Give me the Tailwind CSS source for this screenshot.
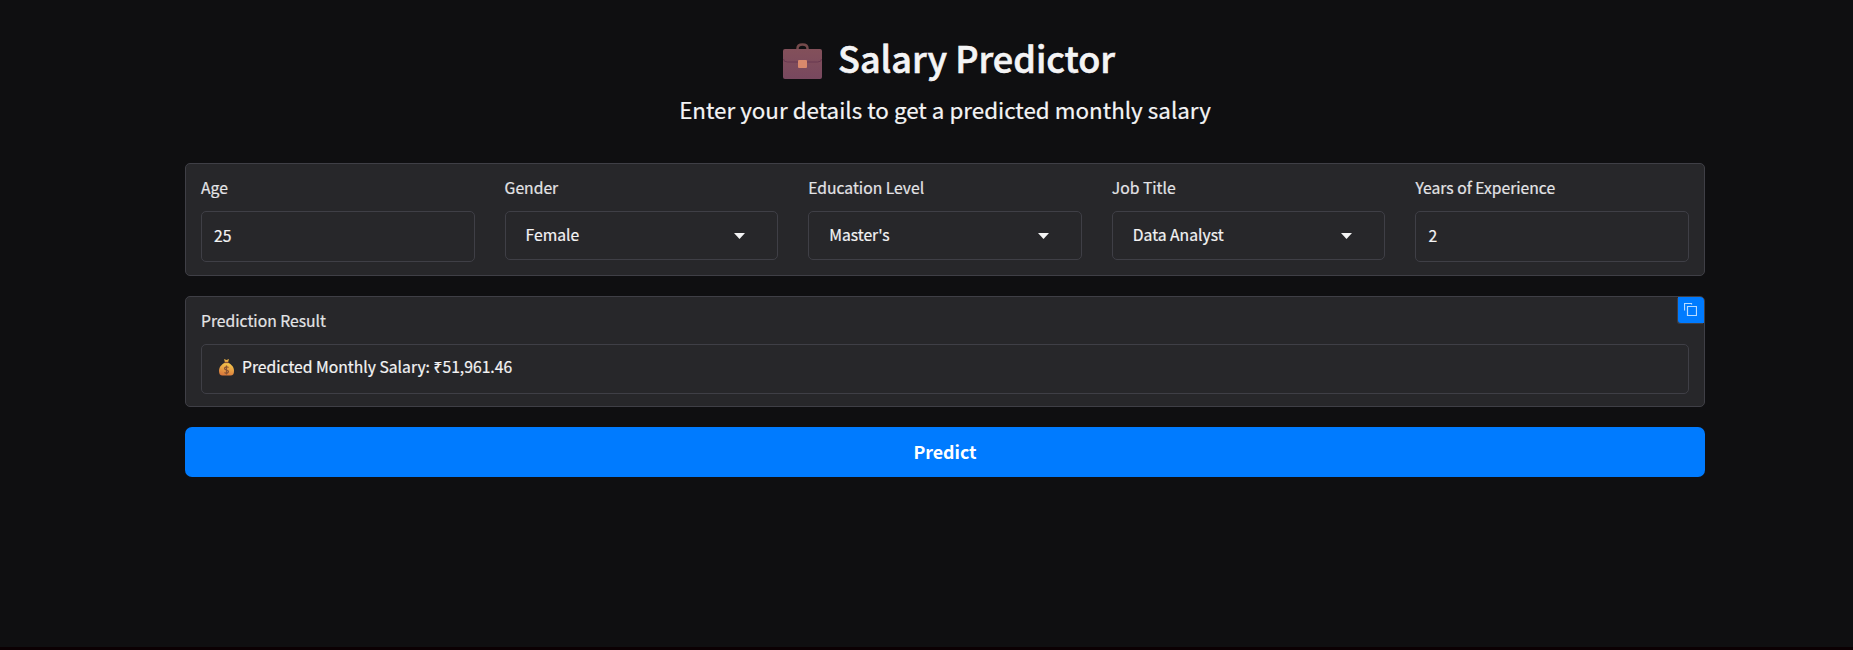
<!DOCTYPE html>
<html lang="en">
<head>
<meta charset="utf-8">
<title>Salary Predictor</title>
<script src="https://cdn.jsdelivr.net/npm/@tailwindcss/browser@4"></script>
</head>
<body class="flex h-[650px] flex-col overflow-hidden border-b-3 border-[#0b0003] bg-[#0f0f11] font-['Noto_Sans_CJK_SC','Noto_Sans',sans-serif] text-[#f4f4f5]">
<main class="ml-[185px] w-[1520px] flex-1 pt-9">
  <h1 class="ml-[597px] flex h-12 items-center whitespace-nowrap text-[36px] font-medium leading-[48px] [-webkit-text-stroke:0.6px_#f4f4f5]">
    <svg class="mt-px h-9 w-10 shrink-0" viewBox="0 0 40 36">
      <defs><linearGradient id="case" x1="0" y1="0" x2="0" y2="1"><stop offset="0" stop-color="#83505a"/><stop offset="1" stop-color="#78485f"/></linearGradient></defs>
      <path d="M15.500 7V5.500Q15.500 1.500 20.500 1.500Q25.500 1.500 25.500 5.500V7" fill="none" stroke="#744a4b" stroke-width="2.500"/>
      <rect x="1" y="6" width="39" height="30" rx="2" fill="url(#case)"/>
      <path d="M1.500 16Q1.500 19 5.500 19H35.500Q39.500 19 39.500 16" fill="none" stroke="#693850"/>
      <rect x="16" y="17" width="9" height="8" rx="1" fill="#d9896c"/>
    </svg>
    <span class="-mt-[6px] ml-4">Salary Predictor</span>
  </h1>
  <p class="mt-[9px] h-[33px] whitespace-nowrap text-center text-[22.4px] leading-8 [-webkit-text-stroke:0.2px_#f4f4f5]">Enter your details to get a predicted monthly salary</p>

  <section class="mt-[37px] grid h-[113px] grid-cols-5 gap-x-[30px] rounded-[5px] border border-[#3f3f46] bg-[#27272a] px-[15px] pt-[14px] text-[15.7px] [-webkit-text-stroke:0.2px_currentColor]">
    <div><div class="h-[33px] text-[#e4e4e7] leading-5">Age</div><div class="flex h-[51px] items-center rounded-[5px] border border-[#3f3f46] px-3 pb-px">25</div></div>
    <div><div class="h-[33px] text-[#e4e4e7] leading-5">Gender</div><div class="flex h-[49px] items-center justify-between rounded-[5px] border border-[#3f3f46] pl-5 pr-8"><span class="-mt-0.5">Female</span><svg class="mt-px h-[6px] w-[11px]" viewBox="0 0 11 6" fill="currentColor"><path d="M0 0H11L5.500 6Z"/></svg></div></div>
    <div><div class="h-[33px] text-[#e4e4e7] leading-5">Education Level</div><div class="flex h-[49px] items-center justify-between rounded-[5px] border border-[#3f3f46] pl-5 pr-8"><span class="-mt-0.5">Master's</span><svg class="mt-px h-[6px] w-[11px]" viewBox="0 0 11 6" fill="currentColor"><path d="M0 0H11L5.500 6Z"/></svg></div></div>
    <div><div class="h-[33px] text-[#e4e4e7] leading-5">Job Title</div><div class="flex h-[49px] items-center justify-between rounded-[5px] border border-[#3f3f46] pl-5 pr-8"><span class="-mt-0.5">Data Analyst</span><svg class="mt-px h-[6px] w-[11px]" viewBox="0 0 11 6" fill="currentColor"><path d="M0 0H11L5.500 6Z"/></svg></div></div>
    <div><div class="h-[33px] text-[#e4e4e7] leading-5">Years of Experience</div><div class="flex h-[51px] items-center rounded-[5px] border border-[#3f3f46] px-3 pb-px">2</div></div>
  </section>

  <section class="relative mt-5 h-[111px] rounded-[5px] border border-[#3f3f46] bg-[#27272a] px-[15px] pt-[14px] text-[15.7px] [-webkit-text-stroke:0.2px_currentColor]">
    <div class="h-[33px] text-[#e4e4e7] leading-5">Prediction Result</div>
    <div class="flex h-[50px] items-center rounded-[5px] border border-[#3f3f46] pb-1 pl-4">
      <svg class="h-[18px] w-[17px] shrink-0" viewBox="0 0 17 18">
        <defs><linearGradient id="bag" x1=".7" y1="0" x2=".4" y2="1"><stop offset="0" stop-color="#f6c94c"/><stop offset="1" stop-color="#d9783c"/></linearGradient></defs>
        <path d="M6 1L8.500 2L11 1L10 4.500H7Z" fill="#e8ae43"/>
        <path d="M6.500 5H10.500C13.500 6.500 16 9 16 13Q16 17.500 12.500 17.500H4.500Q1 17.500 1 13C1 9 3.500 6.500 6.500 5Z" fill="url(#bag)"/>
        <path d="M6.500 4.500H10.500" stroke="#8d5138" stroke-width="1.300"/>
        <path d="M10.500 9.500Q8.500 8 7 9.500T8.500 12T10 14.500T6.500 14.500M8.500 7.500V16.500" fill="none" stroke="#8a5333" stroke-width="1.200"/>
      </svg>
      <span class="ml-[7px] whitespace-nowrap">Predicted Monthly Salary: ₹51,961.46</span>
    </div>
    <button class="absolute right-0 top-0 flex h-[26px] w-[26px] items-center justify-center rounded-bl-[3px] rounded-tr bg-[#007bff] pb-px pr-px shadow-[-1px_1px_0_#3f3f46]" aria-label="Copy">
      <svg class="h-[13px] w-[13px]" viewBox="0 0 13 13" fill="none" stroke="#b9dbff"><path stroke-width="1.200" d="M3.500 3.500H12.500V12.500H3.500ZM.5 7.500V.5H7.500V1.500"/></svg>
    </button>
  </section>

  <button class="mt-5 flex h-[50px] w-full items-center justify-center rounded-[7px] bg-[#007bff] pb-0.5 text-[17.8px] font-bold text-white">Predict</button>
</main>
</body>
</html>
